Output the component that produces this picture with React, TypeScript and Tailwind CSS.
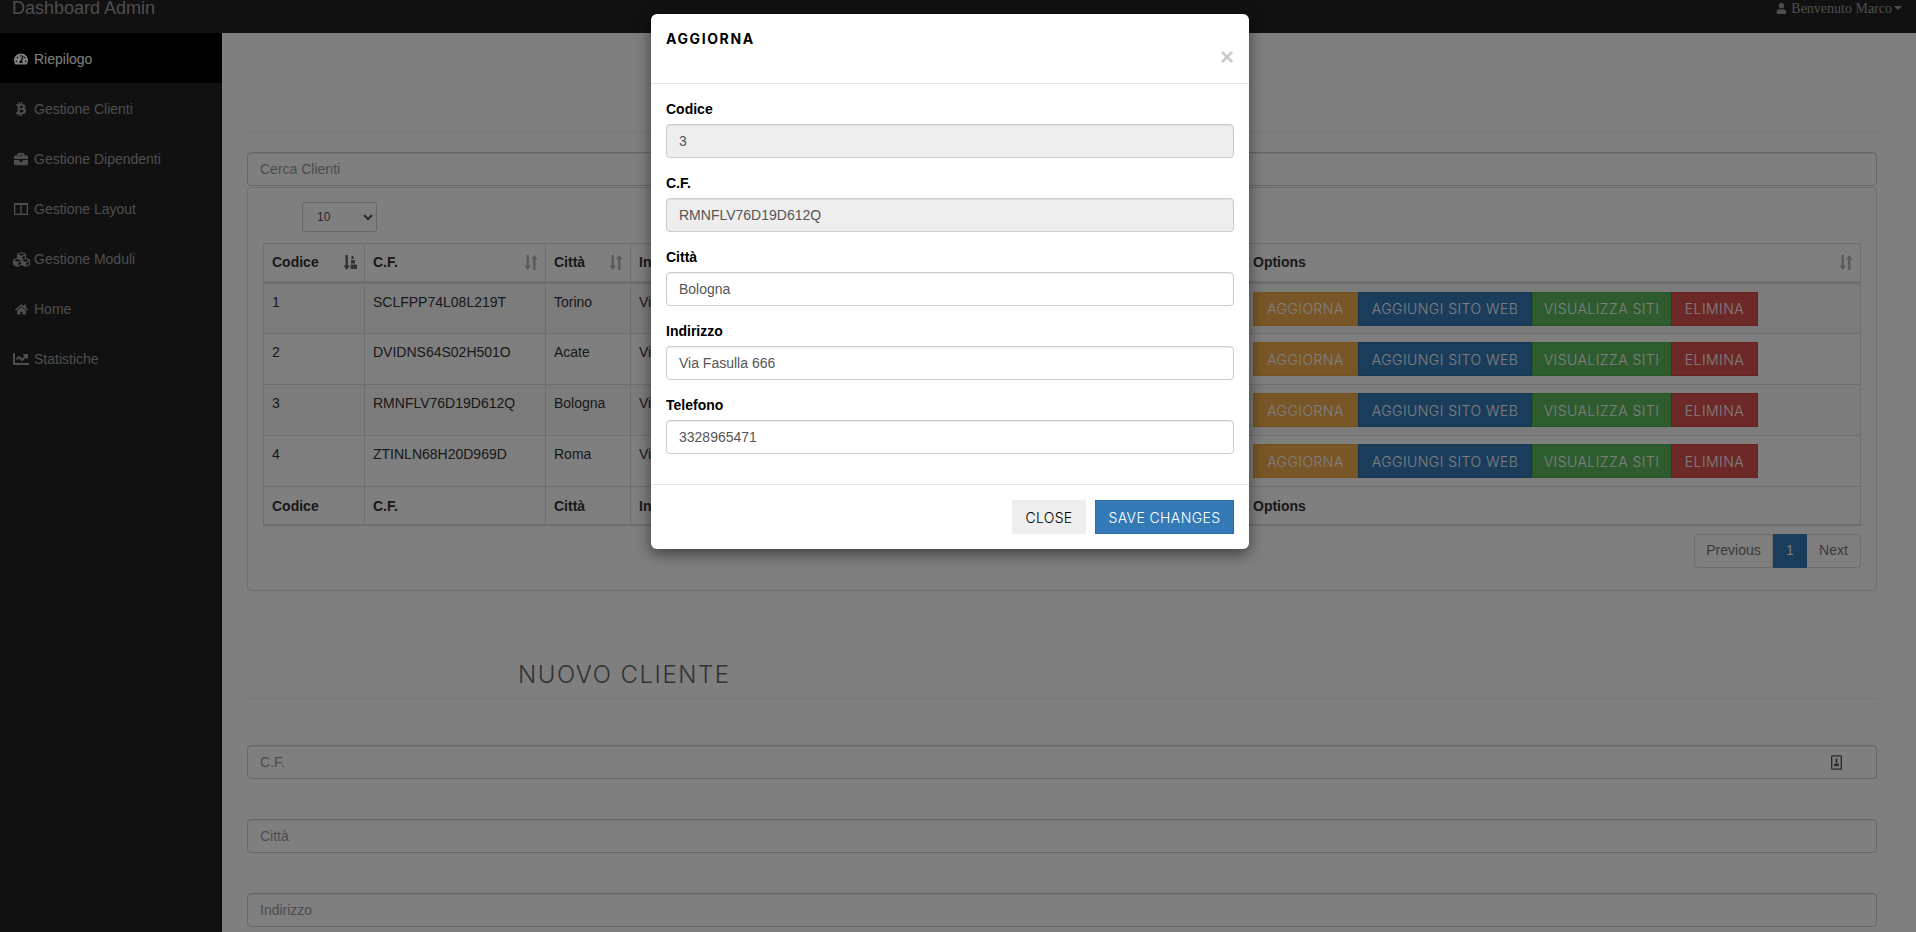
import React from "react";
import { FaTachometerAlt, FaBtc, FaBriefcase, FaCubes, FaHome, FaChartLine, FaUser } from "react-icons/fa";

const sans = "font-['Liberation_Sans',Arial,sans-serif]";
const mont = "font-['Inter',sans-serif]";

function ColumnsIcon() {
  return (
    <svg width="14" height="12" viewBox="0 0 14 12" fill="none" stroke="currentColor" strokeWidth="1.3">
      <rect x="0.65" y="0.65" width="12.7" height="10.7" />
      <path d="M7 1v10M1 1.3h12" />
    </svg>
  );
}

const menu = [
  { label: "Riepilogo", icon: <FaTachometerAlt size={14} />, active: true },
  { label: "Gestione Clienti", icon: <FaBtc size={14} /> },
  { label: "Gestione Dipendenti", icon: <FaBriefcase size={14} /> },
  { label: "Gestione Layout", icon: <ColumnsIcon /> },
  { label: "Gestione Moduli", icon: <FaCubes size={17} /> },
  { label: "Home", icon: <FaHome size={13} /> },
  { label: "Statistiche", icon: <FaChartLine size={16} /> },
];

const rows = [
  ["1", "SCLFPP74L08L219T", "Torino", "Via Roma 12", "3331234567"],
  ["2", "DVIDNS64S02H501O", "Acate", "Via Milano 8", "3339876543"],
  ["3", "RMNFLV76D19D612Q", "Bologna", "Via Fasulla 666", "3328965471"],
  ["4", "ZTINLN68H20D969D", "Roma", "Via Torino 4", "3341122334"],
];

function SortIcon({ active }: { active?: boolean }) {
  return (
    <svg
      width="14"
      height="15"
      viewBox="0 0 14 15"
      fill="currentColor"
      className={active ? "text-[#666]" : "text-[#b5b5b5]"}
    >
      <path d="M2.5 0h2.4v10.5H7L3.7 15 .4 10.5h2.1z" />
      {active ? (
        <path d="M8.5 1h2.2v3H8.5zM8 5h4v3.4H8zM7.6 9.5H14V14H7.6z" />
      ) : (
        <path d="M9.1 15h2.4V4.5h2.1L10.3 0 7 4.5h2.1z" />
      )}
    </svg>
  );
}

function Th({ children, sort, active, w }: { children?: React.ReactNode; sort?: boolean; active?: boolean; w: string }) {
  return (
    <th className={`${w} border border-b-[3px] border-[#ddd] pr-[7px] pl-2 text-left font-bold`}>
      <div className="flex items-center justify-between">
        <span>{children}</span>
        {sort && <SortIcon active={active} />}
      </div>
    </th>
  );
}

function Tf({ children }: { children?: React.ReactNode }) {
  return <td className="h-[38px] border border-b-2 border-[#ddd] px-2 pt-[2px] font-bold">{children}</td>;
}

function Action({ className, width, children }: { className: string; width: string; children: React.ReactNode }) {
  return (
    <button className={`${width} ${className} ${mont} h-[34px] border text-center text-[14px] font-light tracking-[0.45px] text-white`}>
      {children}
    </button>
  );
}

function Field({ label, value, disabled }: { label: string; value: string; disabled?: boolean }) {
  return (
    <div className="mb-[15px]">
      <label className="mb-[5px] block h-[20px] text-[14px] leading-[20px] font-bold text-black">{label}</label>
      <input
        readOnly
        value={value}
        className={`h-[34px] w-full rounded border border-[#ccc] px-3 text-[14px] text-[#555] shadow-[inset_0_1px_1px_rgba(0,0,0,0.075)] outline-none ${disabled ? "bg-[#eee]" : "bg-white"}`}
      />
    </div>
  );
}

function PageInput({ placeholder, className = "" }: { placeholder: string; className?: string }) {
  return (
    <input
      readOnly
      placeholder={placeholder}
      className={`h-[34px] w-full rounded border border-[#ccc] bg-white px-3 text-[14px] shadow-[inset_0_1px_1px_rgba(0,0,0,0.075)] outline-none placeholder:text-[#999] ${className}`}
    />
  );
}

export default function App() {
  return (
    <div className={`relative h-[932px] w-[1916px] overflow-hidden bg-white ${sans}`}>
      <div className="-mt-[17px]">
        <header className="flex h-[50px] items-center justify-between bg-[#222] pr-[14px] pl-3 text-[#9d9d9d]">
          <span className="text-[18px]">Dashboard Admin</span>
          <span className="flex items-center font-['Liberation_Serif',serif] text-[14px]">
            <FaUser size={11} className="mr-[4px]" />
            Benvenuto Marco
            <span className="ml-[2px] h-0 w-0 border-x-4 border-t-4 border-x-transparent border-t-[#9d9d9d]" />
          </span>
        </header>
        <div className="flex">
          <nav className="h-[900px] w-[222px] shrink-0 bg-[#222] text-[14px]">
            {menu.map((m) => (
              <div
                key={m.label}
                className={`flex h-[50px] items-center pt-[2px] ${m.active ? "bg-black text-white" : "text-[#9d9d9d]"}`}
              >
                <span className="flex w-[34px] justify-center pl-[8px]">{m.icon}</span>
                <span>{m.label}</span>
              </div>
            ))}
          </nav>
          <main className="min-w-0 flex-1 pt-[98px] pr-[39px] pl-[25px] text-[14px] text-[#333]">
            <div className="mb-[20px] border-t border-[#eee]" />
            <PageInput placeholder="Cerca Clienti" />
            <section className="mt-px h-[404px] rounded border border-[#ddd] px-[15px] pt-[14px]">
              <select className="mb-[11px] ml-[39px] block h-[30px] w-[75px] rounded-[3px] border border-[#ccc] bg-white px-[10px] text-[12px] text-[#555]">
                <option>10</option>
              </select>
              <table className="w-[1597px] table-fixed border-collapse">
                <thead>
                  <tr className="h-[39px]">
                    <Th w="w-[101px]" sort active>Codice</Th>
                    <Th w="w-[181px]" sort>C.F.</Th>
                    <Th w="w-[85px]" sort>Città</Th>
                    <Th w="w-[340px]" sort>Indirizzo</Th>
                    <Th w="w-[274px]" sort>Telefono</Th>
                    <Th w="w-[616px]" sort>Options</Th>
                  </tr>
                </thead>
                <tbody>
                  {rows.map((r, i) => (
                    <tr key={r[0]} className={`h-[51px] ${i % 2 === 0 ? "bg-[#f9f9f9]" : "bg-white"}`}>
                      {r.map((c, j) => (
                        <td key={j} className="border border-[#ddd] px-2 pt-2 align-top leading-[20px]">{c}</td>
                      ))}
                      <td className="border border-[#ddd] px-2 align-middle">
                        <div className="flex">
                          <Action width="w-[105px]" className="border-[#eea236] bg-[#f0ad4e]">AGGIORNA</Action>
                          <Action width="w-[174px]" className="border-[#2e6da4] bg-[#337ab7]">AGGIUNGI SITO WEB</Action>
                          <Action width="w-[139px]" className="border-[#4cae4c] bg-[#5cb85c]">VISUALIZZA SITI</Action>
                          <Action width="w-[87px]" className="border-[#d43f3a] bg-[#d9534f]">ELIMINA</Action>
                        </div>
                      </td>
                    </tr>
                  ))}
                </tbody>
                <tfoot>
                  <tr>
                    <Tf>Codice</Tf>
                    <Tf>C.F.</Tf>
                    <Tf>Città</Tf>
                    <Tf>Indirizzo</Tf>
                    <Tf>Telefono</Tf>
                    <Tf>Options</Tf>
                  </tr>
                </tfoot>
              </table>
              <div className="mt-[8px] flex justify-end">
                <div className="flex h-[34px] text-[#777]">
                  <span className="flex w-[79px] items-center justify-center rounded-l border border-[#ddd]">Previous</span>
                  <span className="flex w-[34px] items-center justify-center border border-[#337ab7] bg-[#337ab7] text-white">1</span>
                  <span className="flex w-[54px] items-center justify-center rounded-r border border-l-0 border-[#ddd]">Next</span>
                </div>
              </div>
            </section>
            <div className="relative mt-[72px] h-[36px] border-b border-[#eee]">
              <h2 className={`${mont} ml-[271px] text-[24px] leading-[24px] font-light tracking-[1.5px] text-[#666]`}>NUOVO CLIENTE</h2>
            </div>
            <div className="relative mt-[46px]">
              <PageInput placeholder="C.F." />
              <svg width="11" height="15" viewBox="0 0 12 16" className="absolute top-[10px] right-[35px] text-[#555]" fill="currentColor">
                <path d="M1.5 0h9A1.5 1.5 0 0 1 12 1.5v13a1.5 1.5 0 0 1-1.5 1.5h-9A1.5 1.5 0 0 1 0 14.5v-13A1.5 1.5 0 0 1 1.5 0zm0 1.5v13h9v-13z" />
                <path d="M5 3.5h2V8H5zM3.5 9h5v3h-5z" />
              </svg>
            </div>
            <div className="mt-[40px]"><PageInput placeholder="Città" /></div>
            <div className="mt-[40px]"><PageInput placeholder="Indirizzo" /></div>
          </main>
        </div>
      </div>

      <div className="absolute inset-0 bg-black/50" />

      <div className="absolute top-[14px] left-[651px] w-[598px] rounded-md bg-white shadow-[0_5px_15px_rgba(0,0,0,0.5)]">
        <div className="relative h-[70px] border-b border-[#e5e5e5] px-[15px] pt-[16px]">
          <h4 className={`${mont} text-[14px] leading-[18px] font-bold tracking-[1.6px] text-black`}>AGGIORNA</h4>
          <span className="absolute top-[31px] right-[15px] text-[24px] leading-[24px] font-bold text-[#ccc]">×</span>
        </div>
        <div className="px-[15px] pt-[15px] pb-[15px]">
          <Field label="Codice" value="3" disabled />
          <Field label="C.F." value="RMNFLV76D19D612Q" disabled />
          <Field label="Città" value="Bologna" />
          <Field label="Indirizzo" value="Via Fasulla 666" />
          <Field label="Telefono" value="3328965471" />
        </div>
        <div className="flex justify-end gap-[9px] border-t border-[#e5e5e5] px-[15px] pt-[15px] pb-[15px]">
          <button className={`${mont} h-[34px] w-[74px] bg-[#eee] text-[14px] font-light tracking-[0.3px] text-black`}>CLOSE</button>
          <button className={`${mont} h-[34px] w-[139px] border border-[#2e6da4] bg-[#337ab7] text-[14px] font-light tracking-[0.4px] text-white`}>SAVE CHANGES</button>
        </div>
      </div>
    </div>
  );
}
